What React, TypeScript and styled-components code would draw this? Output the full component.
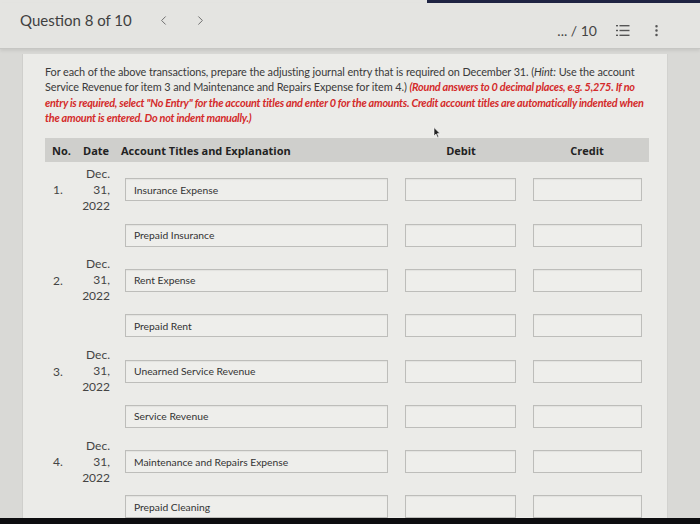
import React from 'react'
import styled, { createGlobalStyle } from 'styled-components'
import { ChevronLeft, ChevronRight, EllipsisVertical } from 'lucide-react'

const GlobalStyle = createGlobalStyle`
  html, body {
    margin: 0;
    padding: 0;
    background: #d9d9d6;
  }
  * {
    box-sizing: border-box;
  }
`

const Page = styled.div`
  width: 700px;
  height: 524px;
  display: flex;
  flex-direction: column;
  overflow: hidden;
  font-family: Lato, 'Liberation Sans', sans-serif;
  color: #3a3a3a;
  background: #d9d9d6;
`

const TopStrip = styled.div`
  height: 3px;
  flex-shrink: 0;
  background: linear-gradient(to right, #e4e4e1 61%, #1f2443 61%);
`

const Header = styled.header`
  height: 46px;
  flex-shrink: 0;
  display: flex;
  justify-content: space-between;
  background: #e4e4e1;
  border-bottom: 1px solid #c6c6c3;
  box-shadow: 0 2px 3px rgba(0, 0, 0, 0.08);
  padding: 0 36px 0 20px;
`

const HeaderLeft = styled.div`
  display: flex;
  align-items: center;
  align-self: flex-start;
  padding-top: 8px;
`

const Title = styled.h1`
  margin: 0;
  font-size: 15px;
  font-weight: 400;
  color: #404040;
`

const NavButton = styled.span<{ $gap: number }>`
  display: flex;
  margin-left: ${(p) => p.$gap}px;
  color: #666;
`

const HeaderRight = styled.div`
  display: flex;
  align-items: center;
  align-self: flex-end;
  padding-bottom: 9px;
  gap: 19px;
`

const Score = styled.span`
  font-size: 14px;
  color: #444;
`

const ListIcon = styled.svg`
  display: block;
`

const Main = styled.main`
  flex: 1;
  display: flex;
  min-height: 0;
  padding: 5px 32px 0 22px;
`

const Card = styled.section`
  flex: 1;
  background: #ebebe8;
  border-left: 1px solid #cfcfcc;
  border-right: 1px solid #d2d2cf;
  padding: 10px 0 0 22px;
  overflow: hidden;
`

const Instructions = styled.p`
  margin: 0;
  font-size: 10.9px;
  line-height: 15.3px;
  color: #3a3a3a;
  letter-spacing: -0.1px;
`

const Line = styled.span`
  display: block;
  white-space: nowrap;
`

const Red = styled.span`
  color: #d42a2a;
  font-weight: 700;
  font-style: italic;
  letter-spacing: -0.25px;
`

const CursorRow = styled.div`
  height: 13px;
  padding: 2px 0 0 388px;
  line-height: 0;
`

const Table = styled.div`
  width: 604px;
  display: grid;
  grid-template-columns: 38px 38px 276px 128px 124px;
`

const HeadCell = styled.div<{ $align?: string; $pad?: number }>`
  height: 24px;
  display: flex;
  align-items: center;
  justify-content: ${(p) => p.$align ?? 'flex-start'};
  padding-left: ${(p) => p.$pad ?? 0}px;
  background: #cfcfcc;
  font-family: 'Open Sans', 'DejaVu Sans', sans-serif;
  font-weight: 700;
  font-size: 11px;
  color: #222;
  margin-bottom: 5px;
`

const Cell = styled.div`
  height: 45.3px;
  display: flex;
  align-items: center;
`

const Num = styled(Cell)`
  padding-left: 8px;
  font-size: 12px;
  color: #444;
`

const DateCell = styled(Cell)`
  justify-content: flex-end;
  padding-right: 11px;
  text-align: right;
  font-size: 12px;
  line-height: 16px;
  color: #444;
  white-space: nowrap;
`

const Field = styled.div<{ $left: number; $width: number }>`
  margin-left: ${(p) => p.$left}px;
  width: ${(p) => p.$width}px;
  height: 23px;
  display: flex;
  align-items: center;
  padding-left: 8px;
  background: #eeeeeb;
  border: 1px solid #bdbdba;
  box-shadow: inset 0 1px 1px rgba(0, 0, 0, 0.05);
  font-size: 10.3px;
  color: #333;
  white-space: nowrap;
`

const entries = [
  { no: '1.', debit: 'Insurance Expense', credit: 'Prepaid Insurance' },
  { no: '2.', debit: 'Rent Expense', credit: 'Prepaid Rent' },
  { no: '3.', debit: 'Unearned Service Revenue', credit: 'Service Revenue' },
  { no: '4.', debit: 'Maintenance and Repairs Expense', credit: 'Prepaid Cleaning' },
]

const Footer = styled.div`
  height: 6px;
  flex-shrink: 0;
  background: #0d0d0f;
`

function EntryLine({ no, date, account }: { no?: string; date?: boolean; account: string }) {
  return (
    <>
      <Num>{no}</Num>
      <DateCell>
        {date && (
          <div>
            Dec.
            <br />
            31,
            <br />
            2022
          </div>
        )}
      </DateCell>
      <Cell>
        <Field $left={4} $width={263}>
          {account}
        </Field>
      </Cell>
      <Cell>
        <Field $left={8} $width={111} />
      </Cell>
      <Cell>
        <Field $left={8} $width={109} />
      </Cell>
    </>
  )
}

export default function App() {
  return (
    <Page>
      <GlobalStyle />
      <TopStrip />
      <Header>
        <HeaderLeft>
          <Title>Question 8 of 10</Title>
          <NavButton $gap={24}>
            <ChevronLeft size={15} strokeWidth={1.5} />
          </NavButton>
          <NavButton $gap={22}>
            <ChevronRight size={15} strokeWidth={1.5} />
          </NavButton>
        </HeaderLeft>
        <HeaderRight>
          <Score>... / 10</Score>
          <ListIcon width="14" height="13" viewBox="0 0 14 13">
            <g fill="#555">
              <rect x="0" y="1" width="2" height="1.4" />
              <rect x="0" y="5.8" width="2" height="1.4" />
              <rect x="0" y="10.6" width="2" height="1.4" />
              <rect x="3.5" y="1" width="10" height="1.4" />
              <rect x="3.5" y="5.8" width="10" height="1.4" />
              <rect x="3.5" y="10.6" width="10" height="1.4" />
            </g>
          </ListIcon>
          <EllipsisVertical size={15} color="#555" />
        </HeaderRight>
      </Header>
      <Main>
        <Card>
          <Instructions>
            <Line>
              For each of the above transactions, prepare the adjusting journal entry that is required on December 31.
              (<i>Hint:</i> Use the account
            </Line>
            <Line>
              Service Revenue for item 3 and Maintenance and Repairs Expense for item 4.){' '}
              <Red>(Round answers to 0 decimal places, e.g. 5,275. If no</Red>
            </Line>
            <Line>
              <Red>
                entry is required, select "No Entry" for the account titles and enter 0 for the amounts. Credit account
                titles are automatically indented when
              </Red>
            </Line>
            <Line>
              <Red>the amount is entered. Do not indent manually.)</Red>
            </Line>
          </Instructions>
          <CursorRow>
            <svg width="8" height="11" viewBox="0 0 8 11">
              <path d="M1 0.5 L1 9 L3 7 L4.6 10.5 L5.8 10 L4.3 6.6 L7 6.6 Z" fill="#222" stroke="#fff" strokeWidth="0.6" />
            </svg>
          </CursorRow>
          <Table>
            <HeadCell $pad={7}>No.</HeadCell>
            <HeadCell>Date</HeadCell>
            <HeadCell>Account Titles and Explanation</HeadCell>
            <HeadCell $align="center">Debit</HeadCell>
            <HeadCell $align="center">Credit</HeadCell>
            {entries.map((e) => (
              <React.Fragment key={e.no}>
                <EntryLine no={e.no} date account={e.debit} />
                <EntryLine account={e.credit} />
              </React.Fragment>
            ))}
          </Table>
        </Card>
      </Main>
      <Footer />
    </Page>
  )
}
